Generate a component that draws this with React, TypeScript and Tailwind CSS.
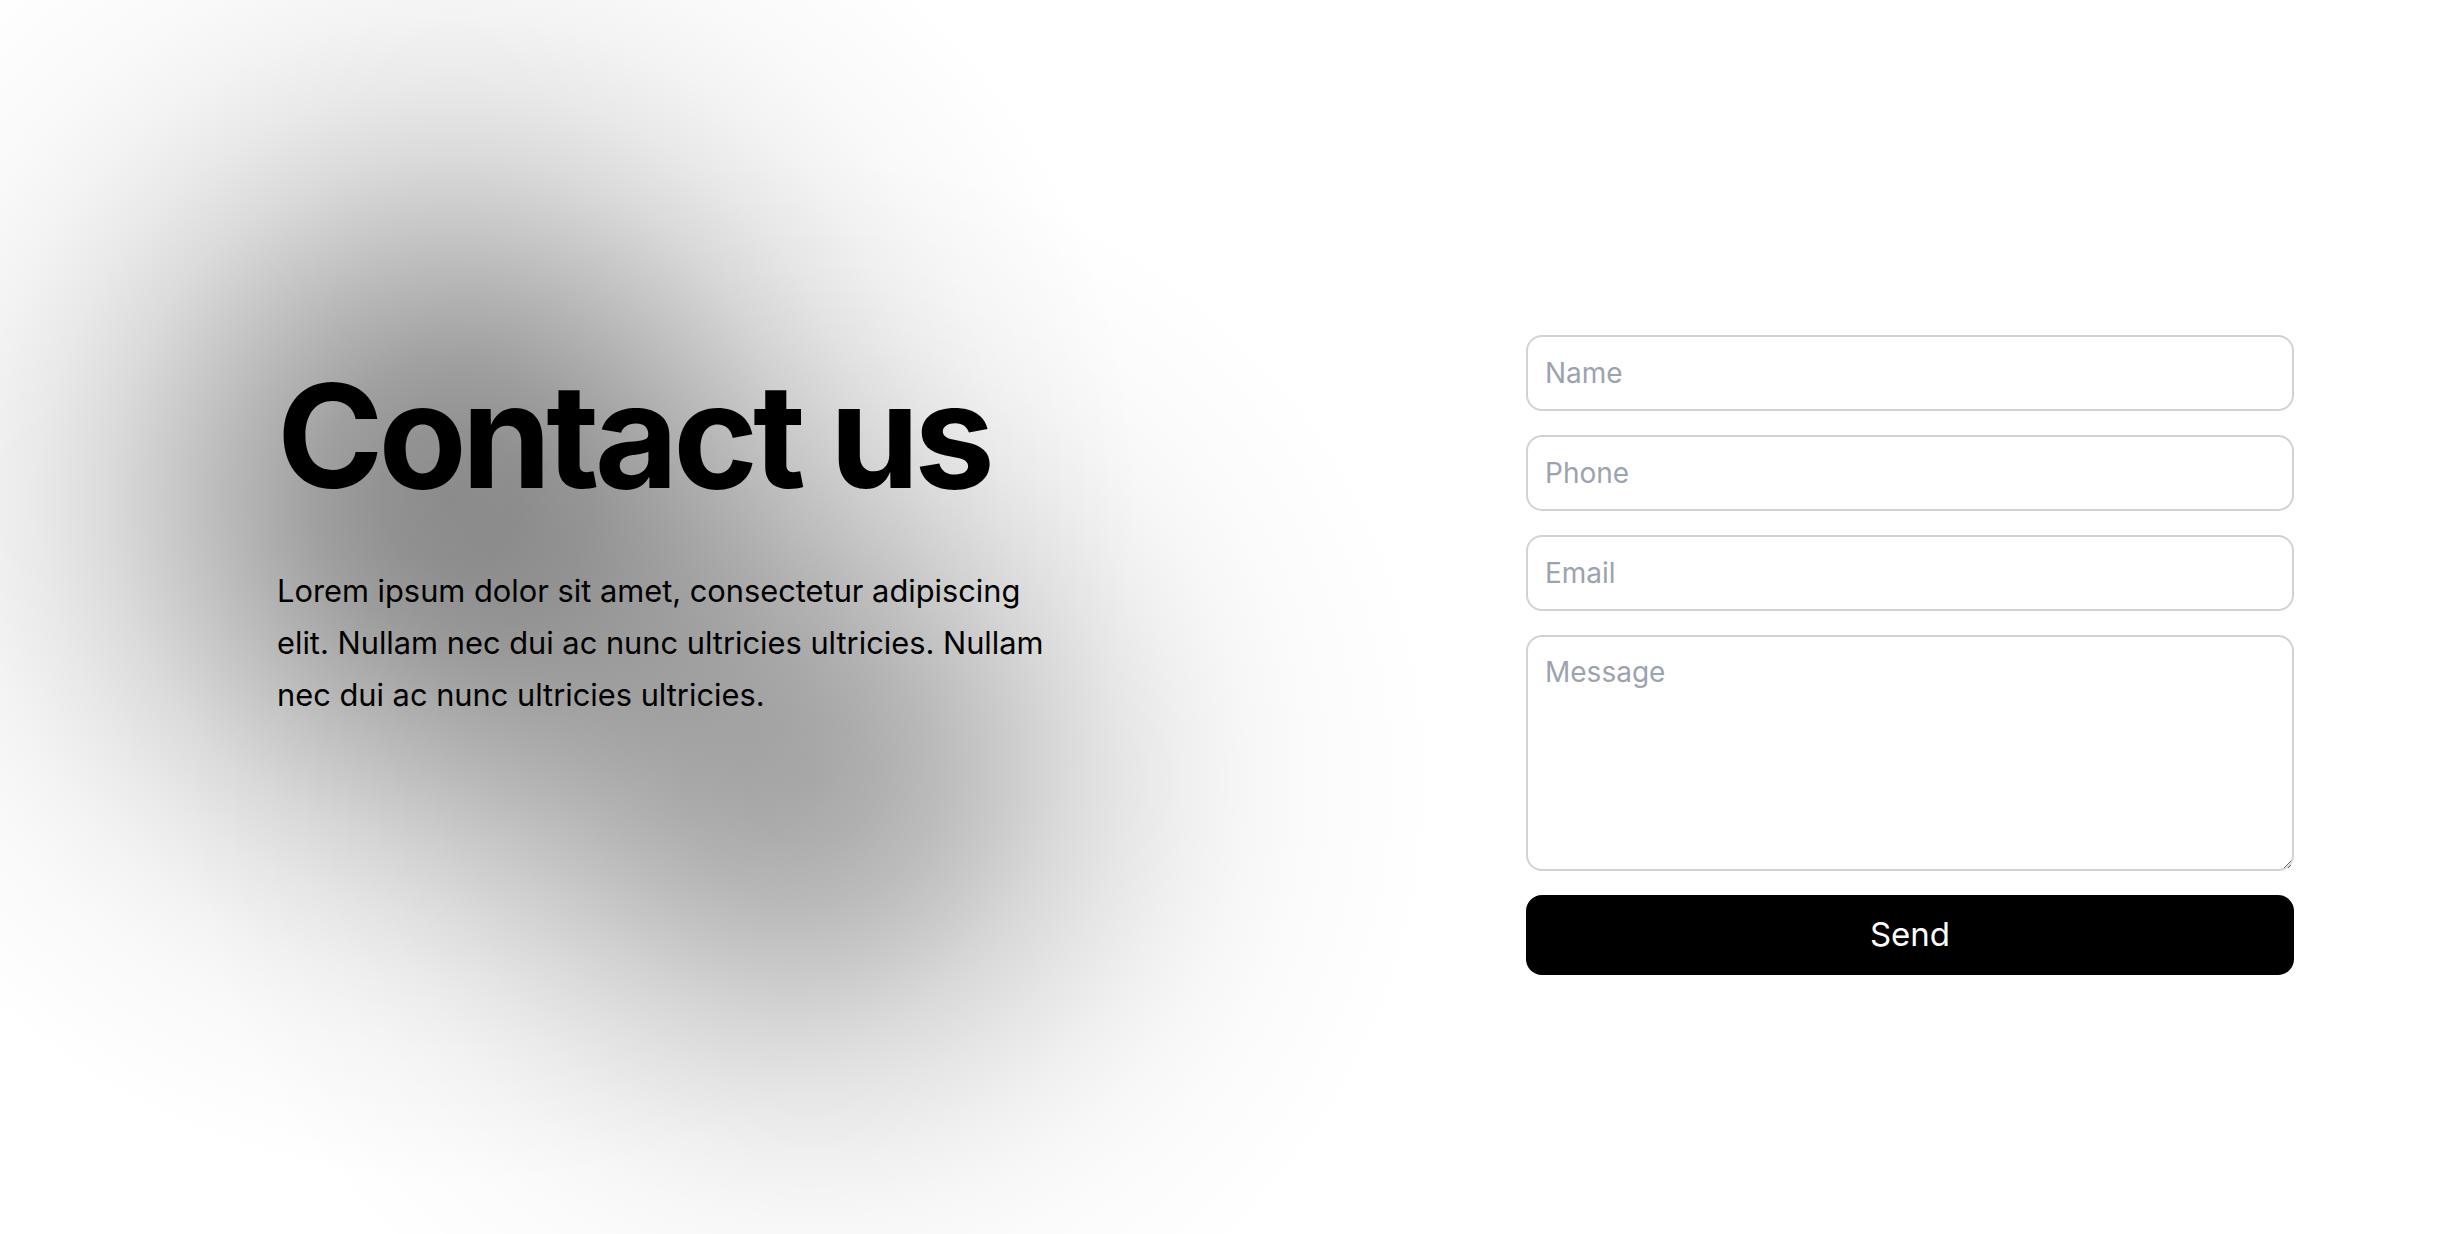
import React from "react";

const fields = ["Name", "Phone", "Email"];

const App = () => {
  return (
    <div className="relative min-h-[1234px] w-full overflow-hidden bg-white font-['Inter',sans-serif] text-black">
      {/* soft gray blob behind the heading */}
      <div className="pointer-events-none absolute inset-0">
        <div className="absolute left-[-238px] top-[-191px] h-[1380px] w-[1380px] bg-[radial-gradient(circle_closest-side,rgba(0,0,0,0.44)_0%,rgba(0,0,0,0.42)_10%,rgba(0,0,0,0.367)_20%,rgba(0,0,0,0.293)_30%,rgba(0,0,0,0.214)_40%,rgba(0,0,0,0.143)_50%,rgba(0,0,0,0.087)_60%,rgba(0,0,0,0.048)_70%,rgba(0,0,0,0.025)_80%,rgba(0,0,0,0.011)_90%,rgba(0,0,0,0)_100%)]" />
        <div className="absolute left-[181px] top-[150px] h-[1260px] w-[1260px] bg-[radial-gradient(circle_closest-side,rgba(0,0,0,0.3)_0%,rgba(0,0,0,0.287)_10%,rgba(0,0,0,0.25)_20%,rgba(0,0,0,0.2)_30%,rgba(0,0,0,0.146)_40%,rgba(0,0,0,0.0975)_50%,rgba(0,0,0,0.059)_60%,rgba(0,0,0,0.033)_70%,rgba(0,0,0,0.017)_80%,rgba(0,0,0,0.008)_90%,rgba(0,0,0,0)_100%)]" />
      </div>

      <main className="relative flex justify-between pl-[277px] pr-[152px]">
        <section className="mt-[364px] flex flex-col">
          <h1 className="text-[144px] font-bold leading-none tracking-[-0.035em]">Contact us</h1>
          <p className="mt-[57px] max-w-3xl text-[30.8px] leading-[52px]">
            Lorem ipsum dolor sit amet, consectetur adipiscing elit. Nullam nec dui ac nunc ultricies
            ultricies. Nullam nec dui ac nunc ultricies ultricies.
          </p>
        </section>

        <form className="mt-[335px] flex w-[768px] flex-col gap-6" onSubmit={(e) => e.preventDefault()}>
          {fields.map((f) => (
            <input
              key={f}
              type="text"
              placeholder={f}
              className="h-[76px] w-full rounded-2xl border-2 border-[#d2d2d2] bg-white px-[17px] text-[28px] outline-none placeholder:text-[#9ca3af]"
            />
          ))}
          <textarea
            placeholder="Message"
            className="block h-[236px] w-full rounded-2xl border-2 border-[#d2d2d2] bg-white px-[17px] py-[14px] text-[28px] leading-[42px] outline-none placeholder:text-[#9ca3af]"
          />
          <button type="submit" className="h-[80px] w-full rounded-2xl bg-black text-[33px] text-white">
            Send
          </button>
        </form>
      </main>
    </div>
  );
};

export default App;
